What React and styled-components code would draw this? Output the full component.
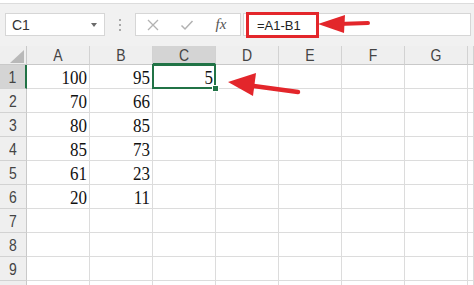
import styled, { createGlobalStyle } from 'styled-components';

const GlobalStyle = createGlobalStyle`
  body {
    margin: 0;
    background: #fff;
  }
  * {
    box-sizing: border-box;
  }
`;

const GREEN = '#217346';
const RED = '#e3262b';
const COLS = ['A', 'B', 'C', 'D', 'E', 'F', 'G', ''];
const DATA = [
  [100, 95, 5],
  [70, 66],
  [80, 85],
  [85, 73],
  [61, 23],
  [20, 11],
  [],
  [],
  [],
  [],
];

const Root = styled.div`
  position: relative;
  width: 474px;
  height: 285px;
  overflow: hidden;
  font-family: 'Liberation Sans', Arial, sans-serif;
`;

const Toolbar = styled.div`
  margin-top: 3px;
  height: 43px;
  display: flex;
  align-items: flex-start;
  padding: 9px 3px 0 5px;
  background: #f1f1f1;
  border-top: 1px solid #dcdcdc;
`;

const Box = styled.div`
  height: 23px;
  background: #fff;
  border: 1px solid #d6d6d6;
`;

const NameBox = styled(Box)`
  width: 100px;
  display: flex;
  align-items: center;
  justify-content: space-between;
  padding: 0 7px 0 6px;
  font-size: 14px;
  color: #333;
`;

const Caret = styled.span`
  width: 0;
  height: 0;
  border-left: 3px solid transparent;
  border-right: 3px solid transparent;
  border-top: 4px solid #6a6a6a;
`;

const Grip = styled.div`
  width: 30px;
  height: 23px;
  display: flex;
  flex-direction: column;
  align-items: center;
  justify-content: center;
  gap: 3px;

  span {
    width: 2px;
    height: 2px;
    background: #a8a8a8;
  }
`;

const IconBox = styled(Box)`
  width: 106px;
  display: grid;
  grid-template-columns: repeat(3, 34px);
  align-items: center;
  justify-items: center;
`;

const Fx = styled.span`
  font-family: 'Liberation Serif', 'Times New Roman', serif;
  font-style: italic;
  font-size: 15px;
  color: #555;
`;

const FormulaInput = styled(Box)`
  position: relative;
  flex: 1;
  margin-left: 2px;
`;

const Highlight = styled.div`
  position: absolute;
  left: 2px;
  top: -2px;
  width: 73px;
  height: 26px;
  border: 3px solid ${RED};
  padding-left: 8px;
  display: flex;
  align-items: center;
  font-size: 13px;
  color: #222;
`;

const Sheet = styled.div`
  display: grid;
  grid-template-columns: 27px repeat(7, 63px) 1fr;
  grid-template-rows: 19px repeat(10, 24px);
`;

const Corner = styled.div`
  background: #efefef;
  border-right: 1px solid #c9c9c9;
  border-bottom: 1px solid #c9c9c9;
  display: flex;
  align-items: flex-end;
  justify-content: flex-end;
  padding: 0 2px 1px 0;
`;

const ColHead = styled.div`
  background: ${(p) => (p.$active ? '#d4d4d4' : '#efefef')};
  border-right: 1px solid #d2d2d2;
  border-bottom: ${(p) => (p.$active ? `2px solid ${GREEN}` : '1px solid #c9c9c9')};
  display: flex;
  align-items: center;
  justify-content: center;
  font-size: 14px;
  color: #444;

  span {
    display: inline-block;
    transform: scaleY(1.15);
  }
`;

const RowHead = styled.div`
  background: ${(p) => (p.$active ? '#d4d4d4' : '#efefef')};
  border-right: ${(p) => (p.$active ? `2px solid ${GREEN}` : '1px solid #c9c9c9')};
  border-bottom: 1px solid #d2d2d2;
  display: flex;
  align-items: center;
  justify-content: center;
  font-size: 14px;
  color: #444;

  span {
    display: inline-block;
    transform: scaleY(1.15);
  }
`;

const Cell = styled.div`
  position: relative;
  border-right: 1px solid #dcdcdc;
  border-bottom: 1px solid #dcdcdc;
  display: flex;
  align-items: center;
  justify-content: flex-end;
  padding: 2px 2px 0 0;
  font-family: 'Liberation Serif', 'Times New Roman', serif;
  font-size: 17px;
  color: #111;

  span {
    display: inline-block;
    transform: scaleY(1.12);
  }

  ${(p) =>
    p.$selected &&
    `
    &::after {
      content: '';
      position: absolute;
      top: -1px;
      left: -1px;
      right: -1px;
      bottom: -1px;
      border: 2px solid ${GREEN};
    }
    &::before {
      content: '';
      position: absolute;
      right: -3px;
      bottom: -3px;
      width: 5px;
      height: 5px;
      background: ${GREEN};
      outline: 1px solid #fff;
      z-index: 1;
    }
  `}
`;

const Overlay = styled.svg`
  position: absolute;
  top: 0;
  left: 0;
  pointer-events: none;
`;

const App = () => (
  <Root>
    <GlobalStyle />
    <Toolbar>
      <NameBox>
        <span>C1</span>
        <Caret />
      </NameBox>
      <Grip>
        <span />
        <span />
        <span />
      </Grip>
      <IconBox>
        <svg width="14" height="14" viewBox="0 0 14 14">
          <path d="M2 2 L12 12 M12 2 L2 12" stroke="#b2b2b2" strokeWidth="1.3" fill="none" />
        </svg>
        <svg width="14" height="14" viewBox="0 0 14 14">
          <path d="M1.5 7.5 L5 11 L12.5 3" stroke="#b2b2b2" strokeWidth="1.5" fill="none" />
        </svg>
        <Fx>fx</Fx>
      </IconBox>
      <FormulaInput>
        <Highlight>=A1-B1</Highlight>
      </FormulaInput>
    </Toolbar>

    <Sheet>
      <Corner>
        <svg width="14" height="13" viewBox="0 0 14 13">
          <polygon points="14,0 14,13 0,13" fill="#b9b9b9" />
        </svg>
      </Corner>
      {COLS.map((c, i) => (
        <ColHead key={i} $active={c === 'C'}>
          <span>{c}</span>
        </ColHead>
      ))}
      {DATA.map((row, r) => [
        <RowHead key={`h${r}`} $active={r === 0}>
          <span>{r + 1}</span>
        </RowHead>,
        ...COLS.map((_, c) => (
          <Cell key={`${r}-${c}`} $selected={r === 0 && c === 2}>
            {row[c] !== undefined && <span>{row[c]}</span>}
          </Cell>
        )),
      ])}
    </Sheet>

    <Overlay width="474" height="285">
      <line x1="368" y1="23" x2="338" y2="24" stroke={RED} strokeWidth="4" strokeLinecap="round" />
      <polygon points="318,24 345,15 344,33" fill={RED} />
      <line x1="298" y1="92" x2="250" y2="85.5" stroke={RED} strokeWidth="4.5" strokeLinecap="round" />
      <polygon points="228,82 256,73 253,96" fill={RED} />
    </Overlay>
  </Root>
);

export default App;
